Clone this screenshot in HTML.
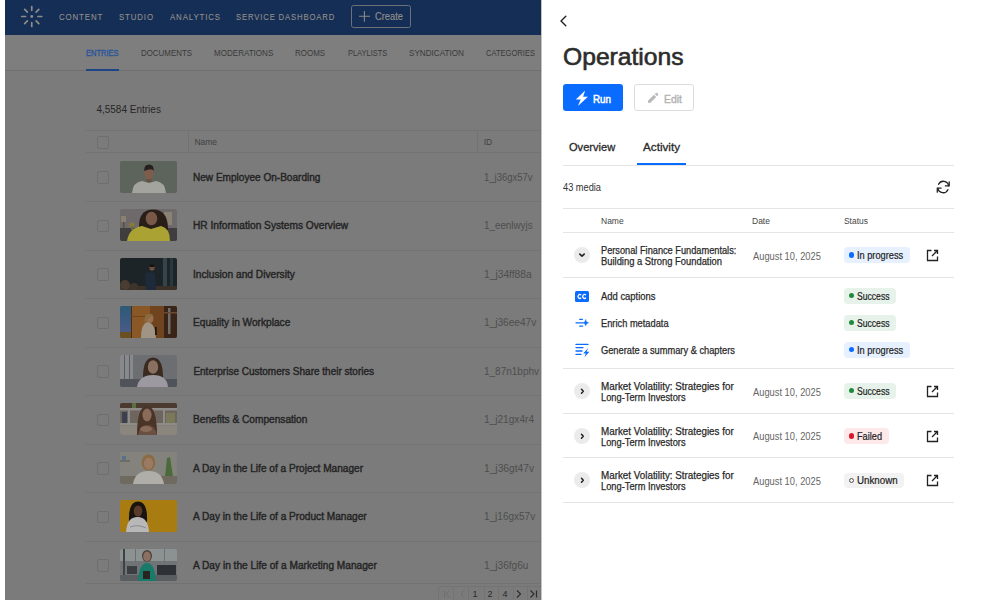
<!DOCTYPE html>
<html><head><meta charset="utf-8"><title>Operations</title>
<style>
html,body{margin:0;padding:0;}
body{width:1004px;height:600px;overflow:hidden;position:relative;background:#fff;font-family:"Liberation Sans",sans-serif;}
.t{position:absolute;white-space:nowrap;transform-origin:0 0;}
#app{position:absolute;left:5px;top:0;width:537px;height:600px;background:#7b7b7b;overflow:hidden;}
.abs{position:absolute;}
.hl{position:absolute;left:86px;width:456px;height:1px;background:#737373;}
.cb{position:absolute;left:96.5px;width:10.5px;height:10.5px;border:1px solid #6e6e6e;border-radius:2px;}
.thumb{position:absolute;}
#panel{position:absolute;left:542px;top:0;width:462px;height:600px;background:#fff;box-shadow:-1px 0 2px rgba(0,0,0,.12);}
.pl{position:absolute;left:563px;width:391px;height:1px;background:#e4e4e4;}
.badge{position:absolute;left:843.5px;height:15.6px;border-radius:4px;}
.dot{position:absolute;left:849px;width:5.2px;height:5.2px;border-radius:50%;}
.ic{position:absolute;overflow:visible;}
.circ{position:absolute;left:574px;width:16.2px;height:16.2px;border-radius:50%;background:#ebebeb;}
</style></head><body>
<div id="app"></div>
<!-- header -->
<div class="abs" style="left:5px;top:0;width:537px;height:35px;background:#152e56"></div>
<svg class="ic" style="left:0;top:0" width="60" height="35" viewBox="0 0 60 35" fill="none" stroke="#908c87" stroke-width="1.7" stroke-linecap="round"><line x1="31.75" y1="10.30" x2="31.75" y2="6.50"/><line x1="36.13" y1="12.12" x2="38.82" y2="9.43"/><line x1="37.95" y1="16.50" x2="41.75" y2="16.50"/><line x1="36.13" y1="20.88" x2="38.82" y2="23.57"/><line x1="31.75" y1="22.70" x2="31.75" y2="26.50"/><line x1="27.37" y1="20.88" x2="24.68" y2="23.57"/><line x1="25.55" y1="16.50" x2="21.75" y2="16.50"/><line x1="27.37" y1="12.12" x2="24.68" y2="9.43"/><circle cx="31.75" cy="16.5" r="1.4" fill="#908c87" stroke="none"/></svg>
<div class="abs" style="left:351.2px;top:5.2px;width:58px;height:20.7px;border:1px solid #6c7078;border-radius:2.5px"></div>
<svg class="ic" style="left:358px;top:10px" width="13" height="13" viewBox="0 0 13 13" stroke="#8a8884" stroke-width="1.1"><path d="M1 6.3H12M6.4 1V11.7"/></svg>
<!-- subnav -->
<div class="abs" style="left:5px;top:35px;width:537px;height:36px;background:#7e7e7e"></div>
<div class="abs" style="left:5px;top:70px;width:537px;height:1px;background:#6f6f6f"></div>
<div class="abs" style="left:86px;top:68.6px;width:33px;height:2px;background:#1d4486"></div>
<!-- table -->
<div class="hl" style="top:130px"></div>
<div class="hl" style="top:152px"></div>
<div class="abs" style="left:188px;top:131px;width:1px;height:21px;background:#737373"></div>
<div class="abs" style="left:477px;top:131px;width:1px;height:21px;background:#737373"></div>
<div class="cb" style="top:136px"></div>
<div class="cb" style="top:171.00px"></div><svg class="thumb" style="left:119.5px;top:160.75px" width="57" height="32" viewBox="0 0 57 32"><defs><clipPath id="c0"><rect width="57" height="32" rx="2"/></clipPath></defs><g clip-path="url(#c0)"><rect width="57" height="32" fill="#5c645c"/><path d="M12 32Q13 21 22 20L29 22L36 20Q45 21 46 32Z" fill="#a3a49e"/><rect x="26.5" y="15" width="5" height="6" fill="#6a4e3e"/><ellipse cx="29" cy="11.8" rx="4.8" ry="6.6" fill="#7d5e4c"/><path d="M24.2 10Q24 3.6 29 3.6Q34 3.6 33.8 10Q32 6.6 24.2 10Z" fill="#262020"/></g></svg><div class="hl" style="top:201.00px"></div><div class="cb" style="top:219.50px"></div><svg class="thumb" style="left:119.5px;top:209.25px" width="57" height="32" viewBox="0 0 57 32"><defs><clipPath id="c1"><rect width="57" height="32" rx="2"/></clipPath></defs><g clip-path="url(#c1)"><rect width="57" height="32" fill="#6e6a6c"/><rect x="0" y="19" width="57" height="13" fill="#403d3e"/><rect x="44" y="3" width="8" height="13" fill="#8a8272"/><rect x="1" y="7" width="5" height="6" fill="#8a8070"/><rect x="3" y="13" width="1.5" height="6" fill="#5a5040"/><circle cx="12" cy="16" r="2.6" fill="#8a7a34"/><rect x="11" y="17" width="2.5" height="4" fill="#6a6a50"/><path d="M19 20Q18 0.5 33 0.5Q48 0.5 48 20L46 24H21Z" fill="#2a1e18"/><ellipse cx="31.5" cy="9.5" rx="5.8" ry="6.8" fill="#7a5848"/><path d="M7 32Q9 19 22 17L31 20L41 17Q50 19 50 32Z" fill="#aaa232"/></g></svg><div class="hl" style="top:249.50px"></div><div class="cb" style="top:268.00px"></div><svg class="thumb" style="left:119.5px;top:257.75px" width="57" height="32" viewBox="0 0 57 32"><defs><clipPath id="c2"><rect width="57" height="32" rx="2"/></clipPath></defs><g clip-path="url(#c2)"><rect width="57" height="32" fill="#1c2428"/><rect x="43" y="0" width="4" height="32" fill="#34444a"/><rect x="50" y="0" width="3" height="32" fill="#2a383e"/><rect x="0" y="28" width="57" height="4" fill="#3a3028"/><ellipse cx="5" cy="27" rx="5" ry="5" fill="#4a3c30"/><ellipse cx="14" cy="29" rx="4" ry="4" fill="#3e342c"/><ellipse cx="30" cy="29" rx="4" ry="3" fill="#6a5a48"/><path d="M26 32L25 16Q29 13 35 15L36 32Z" fill="#1e2a3a"/><ellipse cx="32" cy="9.6" rx="2.6" ry="3.2" fill="#6a5040"/><path d="M29.4 9Q29.6 6 32 6Q34.4 6 34.6 9Z" fill="#1a1410"/></g></svg><div class="hl" style="top:298.00px"></div><div class="cb" style="top:316.50px"></div><svg class="thumb" style="left:119.5px;top:306.25px" width="57" height="32" viewBox="0 0 57 32"><defs><clipPath id="c3"><rect width="57" height="32" rx="2"/></clipPath></defs><g clip-path="url(#c3)"><rect width="57" height="32" fill="#8a5826"/><defs><linearGradient id="g4" x1="0" y1="0" x2="0" y2="1"><stop offset="0" stop-color="#2c5a78"/><stop offset="1" stop-color="#4a5a86"/></linearGradient></defs><rect x="0" y="0" width="11" height="26" fill="url(#g4)"/><rect x="0" y="26" width="11" height="6" fill="#6a5020"/><rect x="11" y="0" width="1" height="32" fill="#4a3010"/><rect x="11" y="10" width="33" height="0.8" fill="#6a4018"/><rect x="30" y="0" width="14" height="32" fill="#70441e"/><rect x="44" y="0" width="13" height="32" fill="#3a2418"/><rect x="48" y="2" width="2.5" height="26" fill="#706e66"/><rect x="44" y="6" width="13" height="1.5" fill="#6a4a30"/><path d="M21 32Q21 17 28 16Q35 17 36 32Z" fill="#a09484"/><ellipse cx="30" cy="12.5" rx="3.4" ry="4.4" fill="#9a7050"/><path d="M24.5 17Q23.5 8 29 8Q33 8 33.5 11Q29 9.5 27 15Z" fill="#8a6a40"/><rect x="35" y="21" width="1.8" height="8" fill="#1a1a1a"/></g></svg><div class="hl" style="top:346.50px"></div><div class="cb" style="top:365.00px"></div><svg class="thumb" style="left:119.5px;top:354.75px" width="57" height="32" viewBox="0 0 57 32"><defs><clipPath id="c4"><rect width="57" height="32" rx="2"/></clipPath></defs><g clip-path="url(#c4)"><rect width="57" height="32" fill="#6c6e72"/><rect x="0" y="0" width="13" height="25" fill="#88898c"/><rect x="4" y="0" width="1" height="25" fill="#5a5c60"/><rect x="9" y="0" width="1" height="25" fill="#5a5c60"/><rect x="0" y="24" width="57" height="8" fill="#50535a"/><path d="M23 27Q22 2.5 33 2.5Q44 2.5 43 27Z" fill="#3a2a20"/><ellipse cx="33" cy="12" rx="5.2" ry="6.8" fill="#8a7060"/><path d="M17 32Q19 20 33 20Q47 20 48 32Z" fill="#9c9aa0"/></g></svg><div class="hl" style="top:395.00px"></div><div class="cb" style="top:413.50px"></div><svg class="thumb" style="left:119.5px;top:403.25px" width="57" height="32" viewBox="0 0 57 32"><defs><clipPath id="c5"><rect width="57" height="32" rx="2"/></clipPath></defs><g clip-path="url(#c5)"><rect width="57" height="32" fill="#6e665e"/><rect x="0" y="0" width="57" height="5" fill="#4a3a30"/><rect x="0" y="5" width="57" height="2.4" fill="#8e8c88"/><rect x="0" y="20" width="57" height="2.4" fill="#8e8c88"/><rect x="0" y="22.4" width="57" height="9.6" fill="#8a867e"/><rect x="8" y="7" width="2" height="13" fill="#8e8c88"/><rect x="43" y="7" width="2" height="13" fill="#8e8c88"/><rect x="2" y="9" width="5" height="11" fill="#3a4050"/><rect x="46" y="10" width="9" height="10" fill="#7a7a5a"/><rect x="12" y="0" width="4" height="5" fill="#5a7040"/><path d="M17 32Q17 3 27 3Q37 3 37 32Z" fill="#4a3428"/><ellipse cx="27" cy="12" rx="4.6" ry="6.4" fill="#8a6a58"/><path d="M18 32Q20 22 27 22Q35 22 37 32Z" fill="#6a5040"/><ellipse cx="26" cy="26" rx="6" ry="3" fill="#8a6a58"/></g></svg><div class="hl" style="top:443.50px"></div><div class="cb" style="top:462.00px"></div><svg class="thumb" style="left:119.5px;top:451.75px" width="57" height="32" viewBox="0 0 57 32"><defs><clipPath id="c6"><rect width="57" height="32" rx="2"/></clipPath></defs><g clip-path="url(#c6)"><rect width="57" height="32" fill="#84827c"/><rect x="0" y="8" width="10" height="2" fill="#6e6c66"/><rect x="2" y="4" width="4" height="4" fill="#5a7088"/><path d="M45 25L47 6L50 5L53 25Z" fill="#4a6a3a"/><rect x="0" y="24" width="57" height="8" fill="#6e6a60"/><ellipse cx="28.5" cy="10.5" rx="6.8" ry="8" fill="#8a6a40"/><ellipse cx="28.5" cy="11.5" rx="4.6" ry="6" fill="#9a7a62"/><path d="M13 32Q15 19 28.5 19Q42 19 44 32Z" fill="#b0aea8"/></g></svg><div class="hl" style="top:492.00px"></div><div class="cb" style="top:510.50px"></div><svg class="thumb" style="left:119.5px;top:500.25px" width="57" height="32" viewBox="0 0 57 32"><defs><clipPath id="c7"><rect width="57" height="32" rx="2"/></clipPath></defs><g clip-path="url(#c7)"><rect width="57" height="32" fill="#a87c10"/><path d="M9 22Q8 1.5 18 1.5Q28 1.5 27 22Z" fill="#1a1410"/><ellipse cx="18" cy="11" rx="4.3" ry="5.6" fill="#5a3a28"/><path d="M6 32Q7 17 17.5 17Q28 17 29 32Z" fill="#b8b8b8"/><path d="M10 27Q18 24 26 28" fill="none" stroke="#8a8a8a" stroke-width="1"/></g></svg><div class="hl" style="top:540.50px"></div><div class="cb" style="top:559.00px"></div><svg class="thumb" style="left:119.5px;top:548.75px" width="57" height="32" viewBox="0 0 57 32"><defs><clipPath id="c8"><rect width="57" height="32" rx="2"/></clipPath></defs><g clip-path="url(#c8)"><rect width="57" height="32" fill="#707476"/><rect x="0" y="0" width="57" height="12" fill="#8c9292"/><rect x="3" y="0" width="2" height="32" fill="#3e4244"/><rect x="15" y="0" width="1" height="14" fill="#6a7070"/><rect x="44" y="0" width="1" height="14" fill="#6a7070"/><rect x="37" y="16" width="19" height="10" fill="#2e3236"/><rect x="7" y="17" width="10" height="8" fill="#3a3e40"/><rect x="0" y="26" width="57" height="6" fill="#5a5e60"/><ellipse cx="27" cy="7" rx="5" ry="6" fill="#4a4038"/><ellipse cx="27" cy="7.5" rx="3.8" ry="5" fill="#8a7060"/><path d="M18 32Q19 14 27 14Q35 14 36 32Z" fill="#1a7a6a"/><rect x="23" y="22" width="7" height="8" fill="#2a2420"/></g></svg>
<!-- pagination -->
<div class="abs" style="left:86px;top:583px;width:456px;height:1px;background:#727272"></div>
<div class="abs" style="left:438px;top:585.5px;width:110px;height:20px;border:1px solid #737373;border-radius:2px"></div>
<div class="abs" style="left:453px;top:586px;width:1px;height:14px;background:#737373"></div>
<div class="abs" style="left:468.4px;top:586px;width:1px;height:14px;background:#737373"></div>
<div class="abs" style="left:483.7px;top:586px;width:1px;height:14px;background:#737373"></div>
<div class="abs" style="left:498.4px;top:586px;width:1px;height:14px;background:#737373"></div>
<div class="abs" style="left:513px;top:586px;width:1px;height:14px;background:#737373"></div>
<div class="abs" style="left:527.4px;top:586px;width:1px;height:14px;background:#737373"></div>
<div class="t" style="left:472.5px;top:588px;font-size:9px;line-height:12px;color:#2a2a2a">1</div>
<div class="t" style="left:487.5px;top:588px;font-size:9px;line-height:12px;color:#2a2a2a">2</div>
<div class="t" style="left:502.5px;top:588px;font-size:9px;line-height:12px;color:#2a2a2a">4</div>
<svg class="ic" style="left:440px;top:588px" width="100" height="12" viewBox="0 0 100 12" fill="none" stroke-width="1"><path d="M4.5 2.5V9.5M9.5 2.5L6 6L9.5 9.5" stroke="#6e6e6e"/><path d="M24.5 2.5L21 6L24.5 9.5" stroke="#6e6e6e"/><path d="M77 2.5L80.5 6L77 9.5" stroke="#2e2e2e" stroke-width="1.2"/><path d="M90.5 2.5L94 6L90.5 9.5M96.5 2.5V9.5" stroke="#2e2e2e" stroke-width="1.2"/></svg>
<div class="t" style="left:59.00px;top:12.48px;font-size:9px;line-height:10.8px;color:#938f8a;letter-spacing:1px;transform:scaleX(0.8747);-webkit-text-stroke:0.1px #938f8a;">CONTENT</div>
<div class="t" style="left:119.00px;top:12.48px;font-size:9px;line-height:10.8px;color:#938f8a;letter-spacing:1px;transform:scaleX(0.8714);-webkit-text-stroke:0.1px #938f8a;">STUDIO</div>
<div class="t" style="left:170.00px;top:12.48px;font-size:9px;line-height:10.8px;color:#938f8a;letter-spacing:1px;transform:scaleX(0.8717);-webkit-text-stroke:0.1px #938f8a;">ANALYTICS</div>
<div class="t" style="left:236.20px;top:12.48px;font-size:9px;line-height:10.8px;color:#938f8a;letter-spacing:1px;transform:scaleX(0.8550);-webkit-text-stroke:0.1px #938f8a;">SERVICE DASHBOARD</div>
<div class="t" style="left:375.00px;top:10.73px;font-size:10px;line-height:12.0px;color:#938f8a;transform:scaleX(0.9328);-webkit-text-stroke:0.15px #938f8a;">Create</div>
<div class="t" style="left:86.00px;top:48.48px;font-size:9px;line-height:10.8px;color:#28549a;transform:scaleX(0.8330);-webkit-text-stroke:0.35px #28549a;">ENTRIES</div>
<div class="t" style="left:141.00px;top:48.48px;font-size:9px;line-height:10.8px;color:#3a3a3a;transform:scaleX(0.8793);">DOCUMENTS</div>
<div class="t" style="left:214.00px;top:48.48px;font-size:9px;line-height:10.8px;color:#3a3a3a;transform:scaleX(0.8938);">MODERATIONS</div>
<div class="t" style="left:295.30px;top:48.48px;font-size:9px;line-height:10.8px;color:#3a3a3a;transform:scaleX(0.8849);">ROOMS</div>
<div class="t" style="left:347.80px;top:48.48px;font-size:9px;line-height:10.8px;color:#3a3a3a;transform:scaleX(0.8277);">PLAYLISTS</div>
<div class="t" style="left:409.00px;top:48.48px;font-size:9px;line-height:10.8px;color:#3a3a3a;transform:scaleX(0.9040);">SYNDICATION</div>
<div class="t" style="left:486.00px;top:48.48px;font-size:9px;line-height:10.8px;color:#3a3a3a;transform:scaleX(0.8399);">CATEGORIES</div>
<div class="t" style="left:96.40px;top:103.53px;font-size:10px;line-height:12.0px;color:#262626;">4,5584 Entries</div>
<div class="t" style="left:194.40px;top:137.35px;font-size:8.5px;line-height:10.2px;color:#404040;">Name</div>
<div class="t" style="left:483.70px;top:137.35px;font-size:8.5px;line-height:10.2px;color:#404040;">ID</div>
<div class="t" style="left:193.40px;top:171.93px;font-size:10px;line-height:12.0px;color:#242424;transform:scaleX(1.0053);-webkit-text-stroke:0.4px #242424;">New Employee On-Boarding</div>
<div class="t" style="left:484.00px;top:171.73px;font-size:10px;line-height:12.0px;color:#4e4e4e;transform:scaleX(0.9500);">1_j36gx57v</div>
<div class="t" style="left:193.40px;top:220.43px;font-size:10px;line-height:12.0px;color:#242424;transform:scaleX(1.0155);-webkit-text-stroke:0.4px #242424;">HR Information Systems Overview</div>
<div class="t" style="left:484.00px;top:220.23px;font-size:10px;line-height:12.0px;color:#4e4e4e;transform:scaleX(0.9821);">1_eenlwyjs</div>
<div class="t" style="left:193.40px;top:268.93px;font-size:10px;line-height:12.0px;color:#242424;transform:scaleX(1.0185);-webkit-text-stroke:0.4px #242424;">Inclusion and Diversity</div>
<div class="t" style="left:484.00px;top:268.73px;font-size:10px;line-height:12.0px;color:#4e4e4e;transform:scaleX(1.0251);">1_j34ff88a</div>
<div class="t" style="left:193.40px;top:317.43px;font-size:10px;line-height:12.0px;color:#242424;transform:scaleX(1.0137);-webkit-text-stroke:0.4px #242424;">Equality in Workplace</div>
<div class="t" style="left:484.00px;top:317.23px;font-size:10px;line-height:12.0px;color:#4e4e4e;transform:scaleX(1.0112);">1_j36ee47v</div>
<div class="t" style="left:193.40px;top:365.93px;font-size:10px;line-height:12.0px;color:#242424;-webkit-text-stroke:0.4px #242424;">Enterprise Customers Share their stories</div>
<div class="t" style="left:484.00px;top:365.73px;font-size:10px;line-height:12.0px;color:#4e4e4e;">1_87n1bphv</div>
<div class="t" style="left:193.40px;top:414.43px;font-size:10px;line-height:12.0px;color:#242424;transform:scaleX(1.0138);-webkit-text-stroke:0.4px #242424;">Benefits &amp; Compensation</div>
<div class="t" style="left:484.00px;top:414.23px;font-size:10px;line-height:12.0px;color:#4e4e4e;transform:scaleX(1.0104);">1_j21gx4r4</div>
<div class="t" style="left:193.40px;top:462.93px;font-size:10px;line-height:12.0px;color:#242424;transform:scaleX(1.0093);-webkit-text-stroke:0.4px #242424;">A Day in the Life of a Project Manager</div>
<div class="t" style="left:484.00px;top:462.73px;font-size:10px;line-height:12.0px;color:#4e4e4e;transform:scaleX(1.0217);">1_j36gt47v</div>
<div class="t" style="left:193.40px;top:511.43px;font-size:10px;line-height:12.0px;color:#242424;transform:scaleX(1.0112);-webkit-text-stroke:0.4px #242424;">A Day in the Life of a Product Manager</div>
<div class="t" style="left:484.00px;top:511.23px;font-size:10px;line-height:12.0px;color:#4e4e4e;">1_j16gx57v</div>
<div class="t" style="left:193.40px;top:559.93px;font-size:10px;line-height:12.0px;color:#242424;transform:scaleX(1.0148);-webkit-text-stroke:0.4px #242424;">A Day in the Life of a Marketing Manager</div>
<div class="t" style="left:484.00px;top:559.73px;font-size:10px;line-height:12.0px;color:#4e4e4e;transform:scaleX(1.0128);">1_j36fg6u</div>
<div id="panel"></div>
<div class="abs" style="left:541px;top:0;width:1px;height:600px;background:#c4c4c4"></div>
<svg class="ic" style="left:558px;top:14px" width="12" height="14" viewBox="0 0 12 14" fill="none" stroke="#222" stroke-width="1.4" stroke-linecap="round" stroke-linejoin="round"><path d="M7.8 2.3L3 7L7.8 11.7"/></svg>
<div class="abs" style="left:563px;top:84.4px;width:60px;height:26.6px;background:#0a6cff;border-radius:3px"></div>
<svg class="ic" style="left:575px;top:91px" width="14" height="15" viewBox="0 0 14 15"><path d="M9.6 0.3L1.4 8.2H6L3.6 14.2L12.4 5.9H7.8Z" fill="#fff" stroke="#fff" stroke-width="0.5" stroke-linejoin="round"/></svg>
<div class="abs" style="left:634px;top:84.4px;width:57.6px;height:24.6px;border:1px solid #dcdcdc;border-radius:3px"></div>
<svg class="ic" style="left:647px;top:92px" width="12" height="12" viewBox="0 0 12 12"><path d="M1.2 8.6L1 11L3.4 10.8L9.2 5L7 2.8Z M7.8 2L10 4.2L11 3.2C11.4 2.8 11.4 2.3 11 1.9L10.1 1C9.7 0.6 9.2 0.6 8.8 1Z" fill="#b8b8b8"/></svg>
<div class="pl" style="top:165px"></div>
<div class="abs" style="left:637.4px;top:163.2px;width:48.4px;height:2px;background:#0a6cff"></div>
<svg class="ic" style="left:936px;top:180px" width="15" height="14" viewBox="0 0 15 14" fill="none" stroke="#222" stroke-width="1.3" stroke-linecap="round" stroke-linejoin="round"><path d="M12.6 5.6A5.3 5.3 0 0 0 2.6 4.3"/><path d="M13.2 1.8V5.9H9.4"/><path d="M1.9 8.4A5.3 5.3 0 0 0 11.9 9.7"/><path d="M1.3 12.2V8.1H5.1"/></svg>
<div class="pl" style="top:208px"></div>
<div class="pl" style="top:232px"></div>
<div class="circ" style="top:246.9px"></div><svg class="ic" style="left:577px;top:250px" width="10" height="10" viewBox="0 0 10 10" fill="none" stroke="#222" stroke-width="1.6" stroke-linecap="round" stroke-linejoin="round"><path d="M2.8 4.1L5 6.2L7.2 4.1"/></svg>
<svg class="ic" style="left:926px;top:249px" width="13" height="13" viewBox="0 0 13 13" fill="none" stroke="#222" stroke-width="1.3"><path d="M5.5 1.5H1.5V11.5H11.5V7.5"/><path d="M6 7L11.5 1.5M8 1.5H11.5V5"/></svg>
<div class="pl" style="top:276.5px"></div>
<svg class="ic" style="left:575px;top:290.6px" width="14" height="11" viewBox="0 0 14 11"><rect width="14" height="10.9" rx="1.5" fill="#0a6cff"/><path d="M6.2 4.1A1.9 1.9 0 1 0 6.2 6.8M10.9 4.1A1.9 1.9 0 1 0 10.9 6.8" fill="none" stroke="#fff" stroke-width="1.3"/></svg>
<svg class="ic" style="left:575px;top:317px" width="14" height="12" viewBox="0 0 14 12" fill="none" stroke="#0a6cff" stroke-width="1.3" stroke-linecap="round"><path d="M4.8 2.4H7.3M1 5.8H7.6M4.8 9.2H7.6"/><path d="M10.7 2.9Q11 5.5 13.6 5.8Q11 6.1 10.7 8.7Q10.4 6.1 7.8 5.8Q10.4 5.5 10.7 2.9Z" fill="#0a6cff" stroke-width="0.5" stroke-linejoin="round"/></svg>
<svg class="ic" style="left:575px;top:343px" width="15" height="15" viewBox="0 0 15 15" fill="none" stroke="#0a6cff" stroke-width="1.3" stroke-linecap="round"><path d="M1 1.4H13M1 4.6H8M1 8H7M1 11.4H6"/><path d="M13.2 5L8.2 10.4H10.9L9.5 14.2L14.4 8.8H11.6Z" fill="#0a6cff" stroke="none"/></svg>
<div class="pl" style="top:368px"></div>
<div class="circ" style="top:382.9px"></div><svg class="ic" style="left:577px;top:386px" width="10" height="10" viewBox="0 0 10 10" fill="none" stroke="#222" stroke-width="1.5" stroke-linecap="round" stroke-linejoin="round"><path d="M4.5 3.2L6.3 5.2L4.5 7.2"/></svg>
<svg class="ic" style="left:926px;top:385px" width="13" height="13" viewBox="0 0 13 13" fill="none" stroke="#222" stroke-width="1.3"><path d="M5.5 1.5H1.5V11.5H11.5V7.5"/><path d="M6 7L11.5 1.5M8 1.5H11.5V5"/></svg>
<div class="pl" style="top:413px"></div>
<div class="circ" style="top:427.59999999999997px"></div><svg class="ic" style="left:577px;top:430.7px" width="10" height="10" viewBox="0 0 10 10" fill="none" stroke="#222" stroke-width="1.5" stroke-linecap="round" stroke-linejoin="round"><path d="M4.5 3.2L6.3 5.2L4.5 7.2"/></svg>
<svg class="ic" style="left:926px;top:429.7px" width="13" height="13" viewBox="0 0 13 13" fill="none" stroke="#222" stroke-width="1.3"><path d="M5.5 1.5H1.5V11.5H11.5V7.5"/><path d="M6 7L11.5 1.5M8 1.5H11.5V5"/></svg>
<div class="pl" style="top:457px"></div>
<div class="circ" style="top:471.9px"></div><svg class="ic" style="left:577px;top:475px" width="10" height="10" viewBox="0 0 10 10" fill="none" stroke="#222" stroke-width="1.5" stroke-linecap="round" stroke-linejoin="round"><path d="M4.5 3.2L6.3 5.2L4.5 7.2"/></svg>
<svg class="ic" style="left:926px;top:474px" width="13" height="13" viewBox="0 0 13 13" fill="none" stroke="#222" stroke-width="1.3"><path d="M5.5 1.5H1.5V11.5H11.5V7.5"/><path d="M6 7L11.5 1.5M8 1.5H11.5V5"/></svg>
<div class="pl" style="top:502px"></div>
<div class="badge" style="top:247.2px;width:66px;background:#e6f0ff"></div><div class="dot" style="top:252.4px;background:#0a6cff"></div><div class="badge" style="top:288px;width:52px;background:#e7f3ea"></div><div class="dot" style="top:293.2px;background:#1f8a3b"></div><div class="badge" style="top:315px;width:52px;background:#e7f3ea"></div><div class="dot" style="top:320.2px;background:#1f8a3b"></div><div class="badge" style="top:342px;width:66px;background:#e6f0ff"></div><div class="dot" style="top:347.2px;background:#0a6cff"></div><div class="badge" style="top:383px;width:52px;background:#e7f3ea"></div><div class="dot" style="top:388.2px;background:#1f8a3b"></div><div class="badge" style="top:428.2px;width:45px;background:#fde8ea"></div><div class="dot" style="top:433.4px;background:#d7192e"></div><div class="badge" style="top:472.5px;width:60px;background:#f2f2f2"></div><div class="dot" style="top:477.5px;background:none;border:1.1px solid #555;width:3.4px;height:3.4px"></div>
<div class="t" style="left:563.00px;top:43.28px;font-size:24px;line-height:28.8px;color:#2c2c2c;transform:scaleX(1.0272);-webkit-text-stroke:0.6px #2c2c2c;">Operations</div>
<div class="t" style="left:593.00px;top:92.59px;font-size:11px;line-height:13.2px;color:#fff;transform:scaleX(0.8916);-webkit-text-stroke:0.5px #fff;">Run</div>
<div class="t" style="left:664.00px;top:92.59px;font-size:11px;line-height:13.2px;color:#b3b3b3;transform:scaleX(0.9489);-webkit-text-stroke:0.4px #b3b3b3;">Edit</div>
<div class="t" style="left:568.80px;top:141.49px;font-size:11px;line-height:13.2px;color:#2b2b2b;transform:scaleX(1.0078);-webkit-text-stroke:0.3px #2b2b2b;">Overview</div>
<div class="t" style="left:643.00px;top:141.49px;font-size:11px;line-height:13.2px;color:#2b2b2b;transform:scaleX(1.0619);-webkit-text-stroke:0.3px #2b2b2b;">Activity</div>
<div class="t" style="left:563.00px;top:182.03px;font-size:10px;line-height:12.0px;color:#333;transform:scaleX(0.9237);">43 media</div>
<div class="t" style="left:601.00px;top:216.15px;font-size:8.5px;line-height:10.2px;color:#454545;">Name</div>
<div class="t" style="left:752.00px;top:216.15px;font-size:8.5px;line-height:10.2px;color:#454545;">Date</div>
<div class="t" style="left:843.90px;top:216.15px;font-size:8.5px;line-height:10.2px;color:#454545;transform:scaleX(0.9913);">Status</div>
<div class="t" style="left:601.40px;top:244.83px;font-size:10px;line-height:12.0px;color:#2a2a2a;transform:scaleX(0.9220);-webkit-text-stroke:0.25px #2a2a2a;">Personal Finance Fundamentals:</div>
<div class="t" style="left:601.40px;top:256.13px;font-size:10px;line-height:12.0px;color:#2a2a2a;transform:scaleX(0.9381);-webkit-text-stroke:0.25px #2a2a2a;">Building a Strong Foundation</div>
<div class="t" style="left:752.50px;top:250.53px;font-size:10px;line-height:12.0px;color:#666;transform:scaleX(0.9321);">August 10, 2025</div>
<div class="t" style="left:601.40px;top:291.03px;font-size:10px;line-height:12.0px;color:#2a2a2a;transform:scaleX(0.9424);-webkit-text-stroke:0.25px #2a2a2a;">Add captions</div>
<div class="t" style="left:601.40px;top:318.03px;font-size:10px;line-height:12.0px;color:#2a2a2a;transform:scaleX(0.9282);-webkit-text-stroke:0.25px #2a2a2a;">Enrich metadata</div>
<div class="t" style="left:601.00px;top:344.93px;font-size:10px;line-height:12.0px;color:#2a2a2a;transform:scaleX(0.9272);-webkit-text-stroke:0.25px #2a2a2a;">Generate a summary &amp; chapters</div>
<div class="t" style="left:601.40px;top:380.93px;font-size:10px;line-height:12.0px;color:#2a2a2a;transform:scaleX(0.9825);-webkit-text-stroke:0.25px #2a2a2a;">Market Volatility: Strategies for</div>
<div class="t" style="left:601.40px;top:392.03px;font-size:10px;line-height:12.0px;color:#2a2a2a;transform:scaleX(0.9281);-webkit-text-stroke:0.25px #2a2a2a;">Long-Term Investors</div>
<div class="t" style="left:752.50px;top:386.53px;font-size:10px;line-height:12.0px;color:#666;transform:scaleX(0.9321);">August 10, 2025</div>
<div class="t" style="left:601.40px;top:425.63px;font-size:10px;line-height:12.0px;color:#2a2a2a;transform:scaleX(0.9825);-webkit-text-stroke:0.25px #2a2a2a;">Market Volatility: Strategies for</div>
<div class="t" style="left:601.40px;top:436.73px;font-size:10px;line-height:12.0px;color:#2a2a2a;transform:scaleX(0.9281);-webkit-text-stroke:0.25px #2a2a2a;">Long-Term Investors</div>
<div class="t" style="left:752.50px;top:431.23px;font-size:10px;line-height:12.0px;color:#666;transform:scaleX(0.9321);">August 10, 2025</div>
<div class="t" style="left:601.40px;top:469.93px;font-size:10px;line-height:12.0px;color:#2a2a2a;transform:scaleX(0.9825);-webkit-text-stroke:0.25px #2a2a2a;">Market Volatility: Strategies for</div>
<div class="t" style="left:601.40px;top:481.03px;font-size:10px;line-height:12.0px;color:#2a2a2a;transform:scaleX(0.9281);-webkit-text-stroke:0.25px #2a2a2a;">Long-Term Investors</div>
<div class="t" style="left:752.50px;top:475.53px;font-size:10px;line-height:12.0px;color:#666;transform:scaleX(0.9321);">August 10, 2025</div>
<div class="t" style="left:857.40px;top:250.13px;font-size:10px;line-height:12.0px;color:#222;transform:scaleX(0.9214);-webkit-text-stroke:0.2px #222;">In progress</div>
<div class="t" style="left:857.40px;top:291.13px;font-size:10px;line-height:12.0px;color:#222;transform:scaleX(0.8599);-webkit-text-stroke:0.2px #222;">Success</div>
<div class="t" style="left:857.40px;top:318.13px;font-size:10px;line-height:12.0px;color:#222;transform:scaleX(0.8599);-webkit-text-stroke:0.2px #222;">Success</div>
<div class="t" style="left:857.40px;top:345.13px;font-size:10px;line-height:12.0px;color:#222;transform:scaleX(0.9214);-webkit-text-stroke:0.2px #222;">In progress</div>
<div class="t" style="left:857.40px;top:386.13px;font-size:10px;line-height:12.0px;color:#222;transform:scaleX(0.8599);-webkit-text-stroke:0.2px #222;">Success</div>
<div class="t" style="left:857.40px;top:431.03px;font-size:10px;line-height:12.0px;color:#222;transform:scaleX(0.9174);-webkit-text-stroke:0.2px #222;">Failed</div>
<div class="t" style="left:857.40px;top:475.33px;font-size:10px;line-height:12.0px;color:#222;transform:scaleX(0.9759);-webkit-text-stroke:0.2px #222;">Unknown</div>
</body></html>
